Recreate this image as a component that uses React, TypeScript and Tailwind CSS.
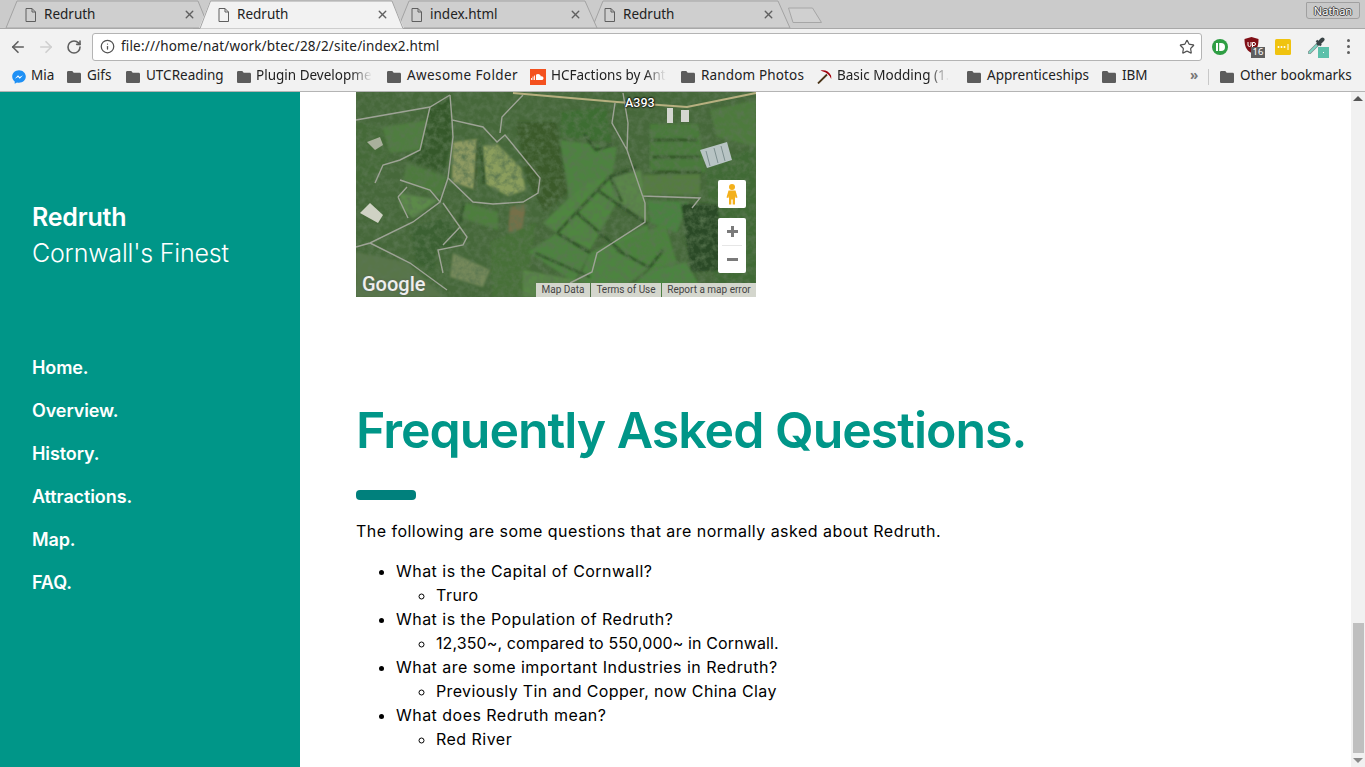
import { ArrowLeft, ArrowRight, Info, RotateCw, Star, X } from 'lucide-react';

const uiFont = "font-['Noto_Sans','Open_Sans',sans-serif]";
const pageFont = "font-['Inter','Open_Sans',sans-serif]";

function DocIcon() {
  return (
    <svg width="11" height="14" viewBox="0 0 11 14" className="shrink-0">
      <path d="M1 .5h6l3.500 3.500v9.500h-9.500z M7 .5v3.500h3.500" fill="none" stroke="#5f5f5f" />
    </svg>
  );
}

function FolderIcon() {
  return (
    <svg width="14" height="12" viewBox="0 0 14 12" className="shrink-0">
      <path d="M1.300 0h4l1.400 1.700h6c.7 0 1.300.6 1.300 1.300v7.700c0 .7-.6 1.300-1.300 1.300h-11.400c-.7 0-1.300-.6-1.300-1.300v-9.400c0-.7.6-1.300 1.300-1.300z" fill="#5c5c5c" />
    </svg>
  );
}

function Messenger() {
  return (
    <svg width="14" height="14" viewBox="0 0 14 14" className="shrink-0">
      <path d="M7 .3c-3.800 0-6.800 2.800-6.800 6.300 0 2 1 3.700 2.500 4.900v2.300l2.300-1.300c.6.200 1.300.3 2 .3 3.800 0 6.800-2.800 6.800-6.200s-3-6.300-6.800-6.300z" fill="#1e90f5" />
      <path d="M2.800 8.700l3.200-3.400 1.700 1.700 3.300-1.700-3.200 3.400-1.700-1.700z" fill="#fff" />
    </svg>
  );
}

function SoundCloud() {
  return (
    <svg width="16" height="16" viewBox="0 0 16 16" className="shrink-0">
      <rect width="16" height="16" fill="#f4511e" />
      <path d="M6 11V5.800c.5-.5 1.300-.8 2-.8 1.500 0 2.700 1.100 2.900 2.500 1.400-.5 2.600.5 2.600 1.700 0 1-.8 1.800-1.800 1.800z" fill="#fff" />
      <path d="M1.500 9v2M3 7.500V11M4.500 6.500V11" stroke="#fff" strokeWidth=".9" />
    </svg>
  );
}

function Pickaxe() {
  return (
    <svg width="15" height="15" viewBox="0 0 15 15" className="shrink-0">
      <path d="M1 14.500L10 5.500" stroke="#4a3418" strokeWidth="1.800" />
      <path d="M3.500 1.500c4-1 8.500.5 10.500 5 .3 1.500.3 2.500.2 3.500-1.500-3.800-4.300-6.500-8.200-7.500z" fill="#a3000c" />
    </svg>
  );
}

const tabs = ['Redruth', 'Redruth', 'index.html', 'Redruth'];

const bookmarks = [
  { label: 'Mia', icon: <Messenger />, width: 55, gap: 5, className: '' },
  { label: 'Gifs', icon: <FolderIcon />, width: 59, gap: 6, className: '' },
  { label: 'UTCReading', icon: <FolderIcon />, width: 111, gap: 6, className: '' },
  { label: 'Plugin Developme', icon: <FolderIcon />, width: 150, gap: 5, fade: true, className: '' },
  { label: 'Awesome Folder', icon: <FolderIcon />, width: 143, gap: 6, className: 'tracking-[0.4px]' },
  { label: 'HCFactions by Ant', icon: <SoundCloud />, width: 151, gap: 5, fade: true, className: '' },
  { label: 'Random Photos', icon: <FolderIcon />, width: 136, gap: 6, className: 'tracking-[0.15px]' },
  { label: 'Basic Modding (1.', icon: <Pickaxe />, width: 150, gap: 5, fade: true, className: '' },
  { label: 'Apprenticeships', icon: <FolderIcon />, width: 135, gap: 6, className: '' },
  { label: 'IBM', icon: <FolderIcon />, width: 60, gap: 6, className: '' },
];

function TabStrip() {
  return (
    <div className="relative h-[29px] bg-[#cbcbcb]">
      <svg className="absolute inset-0" width="1365" height="29" viewBox="0 0 1365 29">
        <path d="M6 28L17 1h181l11 27z" fill="#cfcfcf" stroke="#a3a3a3" />
        <path d="M592 28L603 1h175l12 27z" fill="#cfcfcf" stroke="#a3a3a3" />
        <path d="M398 28L409 1h176l12 27z" fill="#cfcfcf" stroke="#a3a3a3" />
        <path d="M0 28.500h1365" stroke="#a8a8a8" />
        <path d="M199 28.500L210 1h182l12 27.500z" fill="#f2f2f2" />
        <path d="M193 28.500h7L210.500 1h181.500l11 27.500h7" fill="none" stroke="#a3a3a3" />
        <path d="M788.500 8h24l9 14.500h-28.500z" fill="#d0d0d0" stroke="#a6a6a6" strokeLinejoin="round" />
      </svg>
      <div className="relative flex pl-[25px]">
        {tabs.map((t, i) => (
          <div key={i} className="flex h-[29px] w-[193px] items-center">
            <DocIcon />
            <span className={`ml-[8px] w-[140px] text-[13.5px] text-[#222] ${uiFont}`}>{t}</span>
            <X size={13} strokeWidth={2.6} className="ml-[-1px] text-[#606060]" />
          </div>
        ))}
      </div>
      <div className="absolute right-[5px] top-[2px] flex h-[17px] w-[54px] items-center justify-center rounded-b-[3px] rounded-t-[1px] border border-[#a0a0a0] bg-[#c8c8c8]">
        <span className={`text-[11px] leading-none text-white [text-shadow:1px_0_0_#444,-1px_0_0_#444,0_1px_0_#444,0_-1px_0_#444] ${uiFont}`}>Nathan</span>
      </div>
    </div>
  );
}

function Toolbar() {
  return (
    <div className="flex h-[33px] items-center bg-[#f2f2f2] pl-[9px] pt-[2px]">
      <ArrowLeft size={18} strokeWidth={2.2} className="text-[#5f5f5f]" />
      <ArrowRight size={18} strokeWidth={2.2} className="ml-[10px] text-[#cfcfcf]" />
      <RotateCw size={16} strokeWidth={2.4} className="ml-[11px] text-[#5f5f5f]" />
      <div className="ml-[10px] flex h-[28px] w-[1110px] items-center rounded-[3px] border border-[#b4b4b4] bg-white pl-[7px] pr-[6px]">
        <Info size={15} strokeWidth={2} className="text-[#505050]" />
        <span className={`ml-[6px] flex-1 text-[13.5px] tracking-[0.17px] text-[#222] ${uiFont}`}>file:///home/nat/work/btec/28/2/site/index2.html</span>
        <Star size={16} strokeWidth={1.8} className="text-[#505050]" />
      </div>
      <div className="ml-[10px] flex items-center">
        <svg width="16" height="16" viewBox="0 0 16 16">
          <circle cx="8" cy="8" r="8" fill="#2f9e44" />
          <rect x="4" y="4" width="2" height="8" fill="#fff" />
          <path d="M7.200 4h1.800a4 4 0 010 8h-1.800z" fill="#fff" />
        </svg>
        <div className="relative ml-[16px] h-[20px] w-[16px]">
          <svg width="15" height="16" viewBox="0 0 15 16">
            <path d="M7.500 0l7 2c0 6-1 11-7 14-6-3-7-8-7-14z" fill="#800f16" />
            <path d="M4 5v3a1.500 1.500 0 003 0v-3M8.500 10v-4.500h1.500a1.300 1.300 0 010 3h-1.500" fill="none" stroke="#fff" strokeWidth="1" />
          </svg>
          <span className={`absolute left-[7px] top-[10px] flex h-[11px] w-[14px] items-center justify-center bg-[#5f5f5f] text-[9.5px] leading-none text-white ${uiFont}`}>16</span>
        </div>
        <svg width="16" height="16" viewBox="0 0 16 16" className="ml-[15px]">
          <rect width="16" height="16" rx="1.500" fill="#f0c30f" />
          <circle cx="3.500" cy="8" r="1" fill="#fff" />
          <circle cx="6.500" cy="8" r="1" fill="#fff" />
          <circle cx="9.500" cy="8" r="1" fill="#fff" />
          <rect x="12.500" y="5" width="1" height="6" fill="#fff" />
        </svg>
        <div className="relative ml-[17px] h-[22px] w-[22px]">
          <svg width="17" height="18" viewBox="0 0 17 18">
            <path d="M1.500 16.500L9 9" stroke="#7f8f8d" strokeWidth="3.400" strokeLinecap="round" />
            <path d="M1.500 16.500L9 9" stroke="#7fd6c4" strokeWidth="1.800" strokeLinecap="round" />
            <path d="M10.500 7.500L14.500 3.500" stroke="#3a4446" strokeWidth="4" strokeLinecap="round" />
            <path d="M8.500 4.500L13 9.500" stroke="#3a4446" strokeWidth="2.200" />
          </svg>
          <span className="absolute left-[10px] top-[11px] flex h-[11px] w-[11px] items-center justify-center bg-[#5cc0aa]">
            <span className="h-[1px] w-[1px] bg-white" />
          </span>
        </div>
        <div className="ml-[17px] flex flex-col gap-[3px]">
          <span className="h-[3px] w-[3px] rounded-full bg-[#5f5f5f]" />
          <span className="h-[3px] w-[3px] rounded-full bg-[#5f5f5f]" />
          <span className="h-[3px] w-[3px] rounded-full bg-[#5f5f5f]" />
        </div>
      </div>
    </div>
  );
}

function BookmarksBar() {
  return (
    <div className={`flex h-[30px] items-center border-b border-[#b4b4b4] bg-[#f2f2f2] pl-[12px] text-[13.5px] text-[#222] ${uiFont}`}>
      {bookmarks.map((b) => (
        <div key={b.label} className="flex shrink-0 items-center" style={{ width: b.width }}>
          {b.icon}
          <span
            className={`mt-[-2px] whitespace-nowrap ${b.className}`}
            style={{
              marginLeft: b.gap,
              maskImage: b.fade ? 'linear-gradient(to right, #000 82%, transparent)' : undefined,
            }}
          >
            {b.label}
          </span>
        </div>
      ))}
      <span className="ml-[28px] mt-[-2px] w-[18px] font-bold text-[#777]">»</span>
      <span className="h-[16px] w-px bg-[#c8c8c8]" />
      <div className="ml-[11px] flex items-center gap-[6px]">
        <FolderIcon />
        <span className="mt-[-2px]">Other bookmarks</span>
      </div>
    </div>
  );
}

function MapView() {
  const fields: [string, string][] = [
    ['26,35 71,28 64,58 34,61', '#4f7d3f'],
    ['0,30 26,35 34,61 19,91 0,90', '#456b38'],
    ['74,15 94,5 96,45 88,80 52,68 66,55', '#35592c'],
    ['51,71 91,85 84,105 47,88', '#4d7a3e'],
    ['97,50 122,47 120,98 96,90', '#8e9a62'],
    ['126,54 141,52 165,76 170,98 152,104 130,92', '#8b9e5d'],
    ['44,101 82,108 57,126 44,115', '#5b8a4a'],
    ['107,110 142,120 142,138 106,126', '#4d7e3d'],
    ['154,115 170,112 166,142 152,140', '#76704a'],
    ['97,161 134,178 127,195 94,185', '#74885a'],
    ['55,135 95,125 108,150 80,160 78,180 60,170', '#3b6130'],
    ['0,160 50,170 88,205 0,205', '#587548'],
    ['134,150 180,130 170,205 136,205', '#476f38'],
    ['204,48 261,55 257,81 214,111', '#4d8240'],
    ['160,30 200,30 212,100 188,120 170,85', '#3a5a2c'],
    ['205,20 250,15 255,50 205,45', '#3e6d32'],
    ['187,131 214,105 232,90 255,85 262,108 234,158 200,140', '#4f8640'],
    ['255,85 285,78 292,130 262,110', '#5a8648'],
    ['201,141 234,161 218,190 172,160', '#4d8240'],
    ['234,161 292,132 294,175 262,200 222,190', '#4e8440'],
    ['167,178 221,188 214,205 167,205', '#588646'],
    ['294,32 342,32 350,80 294,80', '#4a7a3b'],
    ['287,83 344,81 344,103 287,103', '#557c3f'],
    ['291,108 332,110 321,141 294,131', '#4a823f'],
    ['264,151 309,131 321,171 294,178', '#4c823e'],
    ['294,178 330,170 350,205 262,205', '#4b843f'],
    ['354,18 400,8 400,55 361,45', '#4e7a3e'],
    ['350,75 400,55 400,205 360,205', '#3f6a35'],
    ['325,112 362,112 366,178 335,180', '#2c4a26'],
  ];
  const hedges = [
    'M201 141L254 85L281 75M241 98L291 132M221 121L267 161M261 158L294 176M179 161L234 185M201 141L234 161M307 158L294 175M254 85L266 110',
    'M294 48L341 48M296 65L344 65M296 80L345 80',
    'M122 48L119 98M125 54L128 92M228 42L240 58L258 52M108 110L104 130',
  ];
  const roads = [
    'M94 3L96 28L127 35L141 50L149 43L184 86L182 101L167 110L137 112L117 110L92 86',
    'M96 28L97 45L92 86L84 110L57 130L14 151L0 155M0 28L74 15L94 3M74 15L64 58L44 68L27 73L19 91',
    'M14 151L54 171L91 198M44 88L74 98L84 110M42 105L52 126M42 105L51 95',
    'M87 111L111 145L107 153L82 158L87 181M104 135L87 153M144 41L146 25L167 3',
    'M259 11L256 31L271 58L289 111L289 130L241 161L236 180L214 191M267 1L272 31L271 58M286 104L344 106L336 116',
  ];
  return (
    <div className="relative h-[205px] w-[400px] overflow-hidden">
      <svg width="400" height="205" viewBox="0 0 400 205" className="block">
        <defs>
          <filter id="speckle" x="0" y="0" width="100%" height="100%">
            <feTurbulence type="fractalNoise" baseFrequency="0.16" numOctaves="3" seed="7" />
            <feColorMatrix values="0 0 0 0 0.1  0 0 0 0 0.18  0 0 0 0 0.08  1.9 0 0 0 -0.72" />
          </filter>
          <filter id="soft"><feGaussianBlur stdDeviation="1.300" /></filter>
          <filter id="soft2"><feGaussianBlur stdDeviation="0.800" /></filter>
          <filter id="soft3"><feGaussianBlur stdDeviation="0.450" /></filter>
        </defs>
        <rect width="400" height="205" fill="#46683a" />
        <g filter="url(#soft)">
          {fields.map(([p, c], i) => (
            <polygon key={i} points={p} fill={c} />
          ))}
        </g>
        <g filter="url(#soft2)">
          {hedges.map((d) => (
            <path key={d} d={d} fill="none" stroke="#2e4f28" strokeWidth="2.400" />
          ))}
        </g>
        <rect width="400" height="205" filter="url(#speckle)" />
        <g filter="url(#soft3)">
          {roads.map((d) => (
            <path key={d} d={d} fill="none" stroke="#9ea396" strokeWidth="1.400" />
          ))}
          <path d="M157 1L261 10L331 15L400 1" fill="none" stroke="#b7b080" strokeWidth="2" />
          <path d="M311 16h6v15h-6zM325 18h8v12h-8z" fill="#d4d6d0" />
          <path d="M344 58l27-8 5 18-25 8z" fill="#b8c4c4" />
          <path d="M350 59l4 15M358 56l4 15M365 54l4 15" stroke="#7d8f8f" />
          <path d="M4 121l10-10 13 12-5 8z" fill="#cfd2c4" />
          <path d="M11 50l13-5 3 8-8 5z" fill="#a9b09c" />
        </g>
      </svg>
      <span className="absolute left-[269px] top-[3px] font-['Roboto',sans-serif] text-[12.5px] font-medium leading-[16px] text-white [text-shadow:0_0_2px_#000,0_0_2px_#000,0_0_2px_#000]">A393</span>
      <div className="absolute left-[362px] top-[88px] flex h-[28px] w-[28px] items-center justify-center rounded-[2px] bg-white">
        <svg width="12" height="21" viewBox="0 0 12 21">
          <circle cx="6" cy="3" r="3" fill="#f3b01c" />
          <path d="M2.500 6.500h7l2 7-1.800.5-.7-2v8.500h-2.300v-5h-1.400v5h-2.300v-8.500l-.7 2-1.800-.5z" fill="#f3b01c" />
        </svg>
      </div>
      <div className="absolute left-[362px] top-[126px] flex h-[55px] w-[28px] flex-col items-center rounded-[2px] bg-white">
        <span className="flex h-[27px] items-center justify-center">
          <svg width="11" height="11" viewBox="0 0 11 11"><path d="M0 5.500h11M5.500 0v11" stroke="#7a7a7a" strokeWidth="3" /></svg>
        </span>
        <span className="h-px w-[20px] bg-[#e6e6e6]" />
        <span className="flex h-[27px] items-center justify-center">
          <svg width="11" height="3" viewBox="0 0 11 3"><path d="M0 1.500h11" stroke="#7a7a7a" strokeWidth="3" /></svg>
        </span>
      </div>
      <span className="absolute bottom-[3px] left-[6px] font-['Roboto',sans-serif] text-[20px] font-medium leading-[20px] text-white/90 [text-shadow:0_0_2px_#555]">Google</span>
      <div className="absolute bottom-0 right-0 flex h-[14px] font-['Roboto',sans-serif] text-[10px] leading-[14px] text-[#444]">
        <span className="w-[54px] bg-[#d4d6cd] text-center">Map Data</span>
        <span className="ml-px w-[70px] bg-[#d4d6cd] text-center">Terms of Use</span>
        <span className="ml-px w-[94px] bg-[#d4d6cd] text-center">Report a map error</span>
      </div>
    </div>
  );
}

const nav = ['Home.', 'Overview.', 'History.', 'Attractions.', 'Map.', 'FAQ.'];

const faq = [
  { q: 'What is the Capital of Cornwall?', a: 'Truro', fit: '' },
  { q: 'What is the Population of Redruth?', a: '12,350~, compared to 550,000~ in Cornwall.', fit: 'tracking-[0.11px]' },
  { q: 'What are some important Industries in Redruth?', a: 'Previously Tin and Copper, now China Clay', fit: 'tracking-[0.37px]' },
  { q: 'What does Redruth mean?', a: 'Red River', fit: '' },
];

export default function App() {
  return (
    <div className="flex h-[767px] w-[1365px] flex-col overflow-hidden bg-white">
      <TabStrip />
      <Toolbar />
      <BookmarksBar />
      <div className={`flex min-h-0 flex-1 ${pageFont}`}>
        <aside className="w-[300px] shrink-0 bg-[#009688] pl-[32px] pt-[107px] text-white">
          <h2 className="text-[25px] font-semibold leading-[36px] tracking-[-0.2px]">Redruth</h2>
          <p className="text-[25px] font-light leading-[36px] tracking-[-0.2px]">Cornwall's Finest</p>
          <nav className="mt-[83px] flex flex-col gap-[15px] text-[18px] font-semibold leading-[28px] tracking-[-0.1px]">
            {nav.map((n) => (
              <a key={n}>{n}</a>
            ))}
          </nav>
        </aside>
        <main className="min-w-0 flex-1 pl-[56px]">
          <MapView />
          <h1 className="mt-[97px] text-[50px] font-semibold leading-[72px] tracking-[-1px] text-[#009688]">Frequently Asked Questions.</h1>
          <div className="mt-[24px] h-[10px] w-[60px] rounded-[4px] bg-[#00807c]" />
          <p className="mt-[19px] text-[16px] leading-[24px] tracking-[0.47px] text-black">The following are some questions that are normally asked about Redruth.</p>
          <ul className="mt-[16px] list-disc pl-[40px] text-[16px] leading-[24px] tracking-[0.47px] text-black">
            {faq.map((item) => (
              <li key={item.q}>
                {item.q}
                <ul className="list-[circle] pl-[40px]">
                  <li className={item.fit}>{item.a}</li>
                </ul>
              </li>
            ))}
          </ul>
        </main>
        <div className="flex w-[14px] shrink-0 flex-col items-center bg-[#f1f1f1]">
          <svg width="10" height="5" viewBox="0 0 10 5" className="mt-[4px]"><path d="M5 0l5 5h-10z" fill="#555" /></svg>
          <div className="ml-[1px] mt-[522px] h-[130px] w-[11px] bg-[#bfbfbf]" />
          <svg width="10" height="5" viewBox="0 0 10 5" className="mt-[5px]"><path d="M0 0h10l-5 5z" fill="#8a8a8a" /></svg>
        </div>
      </div>
    </div>
  );
}
